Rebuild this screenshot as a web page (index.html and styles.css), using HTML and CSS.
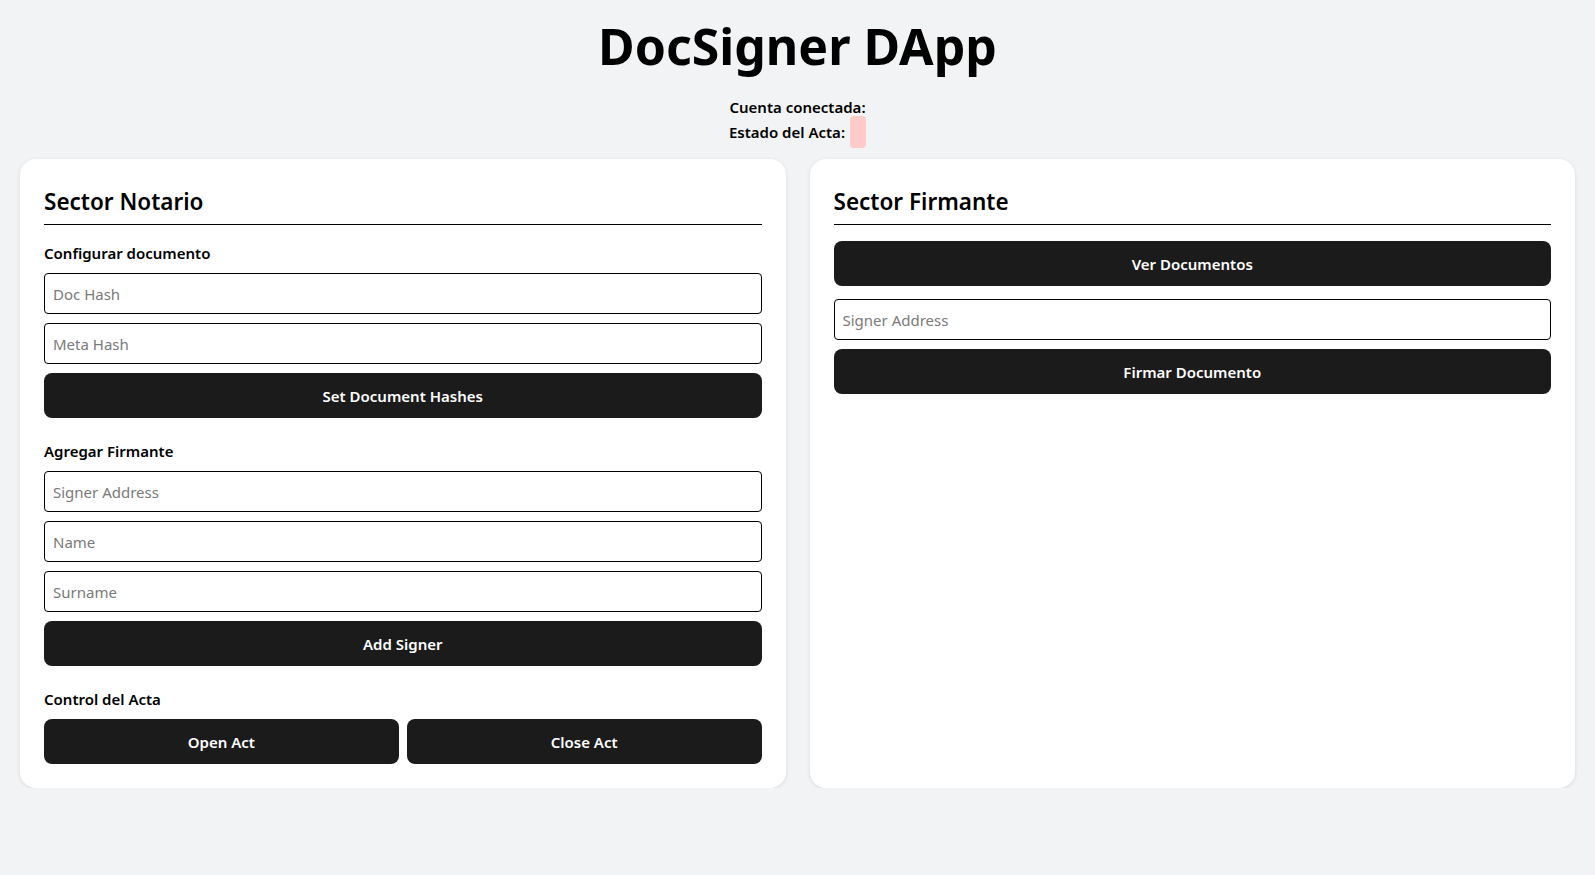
FILE: index.html
```html
<!DOCTYPE html>
<html lang="es">
<head>
    <meta charset="UTF-8">
    <meta name="viewport" content="width=device-width, initial-scale=1.0">
    <title>DocSigner DApp</title>
    <link rel="stylesheet" href="styles.css">
</head>
<body>
    <header class="app-header">
        <h1>DocSigner DApp</h1>
        <div class="status-line">Cuenta conectada: <span class="account"></span></div>
        <div class="status-line">Estado del Acta: <span class="act-status closed"></span></div>
    </header>

    <main class="sectors">
        <!-- Notary side -->
        <section class="card">
            <h2>Sector Notario</h2>

            <div class="group">
                <h3>Configurar documento</h3>
                <input type="text" id="docHash" placeholder="Doc Hash">
                <input type="text" id="metaHash" placeholder="Meta Hash">
                <button type="button">Set Document Hashes</button>
            </div>

            <div class="group">
                <h3>Agregar Firmante</h3>
                <input type="text" id="signerAddress" placeholder="Signer Address">
                <input type="text" id="signerName" placeholder="Name">
                <input type="text" id="signerSurname" placeholder="Surname">
                <button type="button">Add Signer</button>
            </div>

            <div class="group">
                <h3>Control del Acta</h3>
                <div class="button-row">
                    <button type="button">Open Act</button>
                    <button type="button">Close Act</button>
                </div>
            </div>
        </section>

        <!-- Signer side -->
        <section class="card">
            <h2>Sector Firmante</h2>
            <button type="button" class="view-docs">Ver Documentos</button>
            <input type="text" id="signAddress" placeholder="Signer Address">
            <button type="button">Firmar Documento</button>
        </section>
    </main>
</body>
</html>
```

FILE: styles.css
```css
/* Page */
body {
    margin: 0;
    background-color: #f2f3f5;
    font-family: 'Noto Sans', 'Open Sans', sans-serif;
    color: #000;
}

/* Title and status */
.app-header {
    text-align: center;
    padding-top: 14px;
}

.app-header h1 {
    margin: 0 0 17px;
    font-size: 50px;
    line-height: 64px;
    font-weight: 700;
}

.status-line {
    font-size: 15px;
    font-weight: 600;
    line-height: 25px;
}

.act-status {
    padding: 6px 8px;
    margin-left: 5px;
    border-radius: 4px;
}

.act-status.closed {
    background-color: #fecaca;
}

/* Two columns */
.sectors {
    display: grid;
    grid-template-columns: 1fr 1fr;
    gap: 24px;
    padding: 0 20px;
    margin-top: 14px;
}

.card {
    background-color: #fff;
    border-radius: 16px;
    padding: 24px;
    box-shadow: 0 1px 4px rgba(0, 0, 0, 0.1);
    display: flex;
    flex-direction: column;
}

.card h2 {
    margin: 0 0 16px;
    padding: 3px 0 6px;
    font-size: 22.5px;
    line-height: 32px;
    font-weight: 600;
    border-bottom: 1px solid #000;
}

.group {
    display: flex;
    flex-direction: column;
}

.group + .group {
    margin-top: 21px;
}

.group h3 {
    margin: 0 0 8px;
    font-size: 15px;
    line-height: 24px;
    font-weight: 600;
}

/* Fields and buttons */
input {
    box-sizing: border-box;
    width: 100%;
    height: 41px;
    margin: 0 0 9px;
    padding: 0 8px;
    border: 1px solid #000;
    border-radius: 4px;
    font-family: inherit;
    font-size: 15px;
    background-color: #fff;
}

input::placeholder {
    color: #7a7a7a;
}

button {
    box-sizing: border-box;
    width: 100%;
    height: 45px;
    border: none;
    border-radius: 8px;
    background-color: #1b1b1b;
    color: #fff;
    font-family: inherit;
    font-size: 15px;
    font-weight: 600;
    cursor: pointer;
}

button:hover {
    background-color: #333;
}

.view-docs {
    margin-bottom: 13px;
}

.button-row {
    display: flex;
    gap: 8px;
}
```
